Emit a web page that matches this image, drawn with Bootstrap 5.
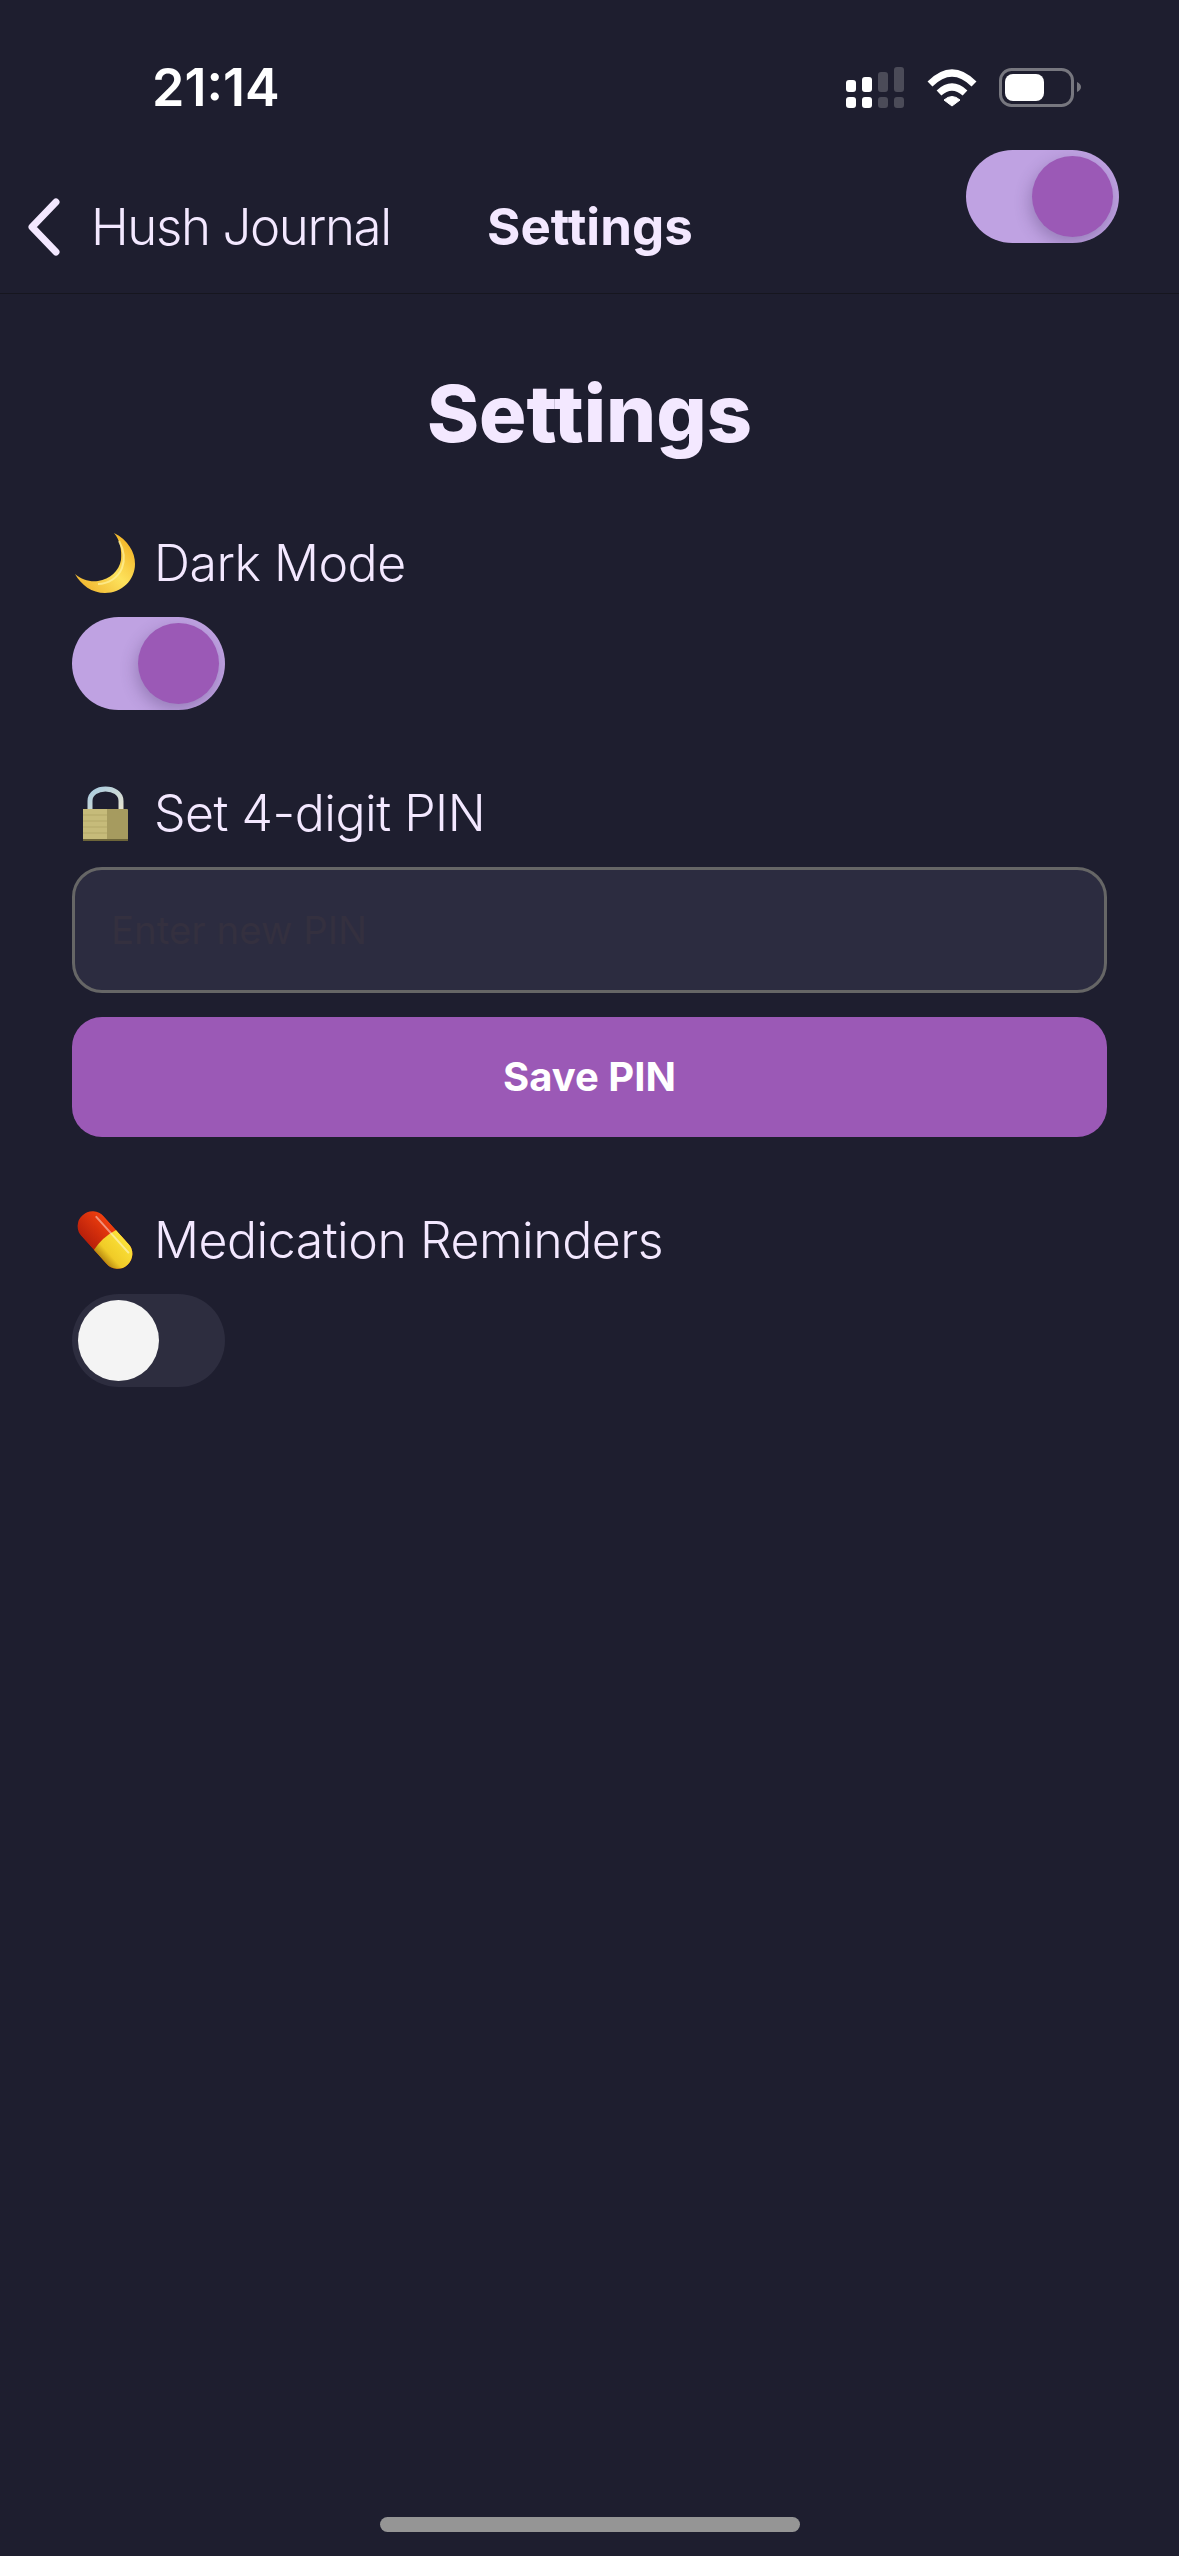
<!DOCTYPE html>
<html lang="en">
<head>
  <meta charset="UTF-8" />
  <meta name="viewport" content="width=device-width, initial-scale=1" />
  <title>Settings</title>
  <link href="https://cdn.jsdelivr.net/npm/bootstrap@5.3.3/dist/css/bootstrap.min.css" rel="stylesheet">

  <style>
    html, body {
      margin: 0;
      background: #1e1e2f;
      font-family: Inter, "Liberation Sans", sans-serif;
      color: #f3e8ff;
    }

    .screen {
      width: 1179px;
      min-height: 2556px;
    }

    /* Status bar */
    .status-bar {
      height: 150px;
      padding: 59px 98px 0 152px;
      color: #fff;
    }

    .status-time {
      font-size: 52px;
      font-weight: 600;
      line-height: 58px;
    }

    .status-icons {
      margin-top: 8px;
    }

    /* Nav row */
    .nav-row {
      height: 144px;
      padding: 0 60px 0 28px;
      border-bottom: 1px solid #16161f;
    }

    .nav-side {
      flex: 0 0 459px;
    }

    .nav-back {
      margin-top: 46px;
      font-size: 51px;
      font-weight: 300;
      line-height: 62px;
      letter-spacing: -1.4px;
      gap: 31px;
      color: #f3e8ff;
    }

    .nav-title {
      margin-top: 46px;
      font-size: 51px;
      font-weight: 700;
      line-height: 62px;
    }

    /* Toggle */
    .switch {
      width: 153px;
      height: 93px;
      padding: 6px;
      border-radius: 47px;
      overflow: hidden;
    }

    .switch-on {
      background: #bfa2e2;
      justify-content: flex-end;
    }

    .switch-off {
      background: #2d2d3f;
      justify-content: flex-start;
    }

    .switch-knob {
      width: 81px;
      height: 81px;
      border-radius: 50%;
    }

    .switch-on .switch-knob {
      background: #9b59b6;
      box-shadow: -2px 6px 16px rgba(60, 40, 90, 0.3);
    }

    .switch-off .switch-knob {
      background: #f4f4f4;
    }

    /* Content */
    .content {
      padding: 69px 72px 0;
    }

    .page-title {
      margin: 0 0 69px;
      font-size: 79px;
      font-weight: 800;
      line-height: 100px;
      text-align: center;
    }

    .setting-label {
      margin-bottom: 23px;
      font-size: 50px;
      font-weight: 300;
      line-height: 62px;
      letter-spacing: -0.5px;
      gap: 10px;
    }

    .setting-group {
      margin-bottom: 72px;
    }

    .pin-input.form-control {
      height: 126px;
      padding: 0 36px;
      margin-bottom: 24px;
      background: #2c2c40;
      border: 3px solid #666;
      border-radius: 30px;
      font-size: 38.4px;
      color: #f3e8ff;
    }

    .pin-input.form-control::placeholder {
      color: #34303f;
      opacity: 1;
    }

    .pin-save.btn {
      height: 120px;
      background: #9b59b6;
      border: 0;
      border-radius: 30px;
      color: #fff;
      font-size: 40px;
      font-weight: 700;
    }

    /* Home indicator */
    .home-bar {
      width: 420px;
      height: 15px;
      margin-bottom: 24px;
      border-radius: 8px;
      background: #959595;
    }
  </style>
</head>
<body>
  <div class="screen d-flex flex-column">

    <div class="status-bar d-flex justify-content-between align-items-start">
      <span class="status-time">21:14</span>
      <svg class="status-icons" width="235" height="42" viewBox="846 67 235 42">
        <g fill="#fff">
          <rect x="846" y="80" width="10" height="12" rx="3"/>
          <rect x="862" y="77" width="10" height="15" rx="3"/>
          <rect x="846" y="97" width="10" height="11" rx="3"/>
          <rect x="862" y="97" width="10" height="11" rx="3"/>
        </g>
        <g fill="#4b4b58">
          <rect x="878" y="72" width="10" height="20" rx="3"/>
          <rect x="894" y="67" width="10" height="25" rx="3"/>
          <rect x="878" y="97" width="10" height="11" rx="3"/>
          <rect x="894" y="97" width="10" height="11" rx="3"/>
        </g>
        <g fill="none" stroke="#fff" stroke-width="7">
          <path d="M930 84 Q952 62 974 84"/>
          <path d="M939 93 Q952 81 965 93"/>
        </g>
        <path d="M944 100 Q952 93 960 100 L952 106 Z" fill="#fff" stroke="#fff" stroke-width="1"/>
        <rect x="1000.500" y="69.500" width="72" height="36" rx="11" fill="none" stroke="#77777f" stroke-width="3"/>
        <rect x="1005" y="74" width="39" height="27" rx="8" fill="#fff"/>
        <path d="M1077 82 Q1081 84 1081 87 Q1081 90 1077 92 Z" fill="#77777f"/>
      </svg>
    </div>

    <nav class="nav-row d-flex align-items-start">
      <div class="nav-side d-flex">
        <a class="nav-back d-flex align-items-center text-decoration-none" href="#">
          <svg width="32" height="58" viewBox="0 0 32 58"><path d="M28 4 L4 29 L28 54" fill="none" stroke="#f3e8ff" stroke-width="7" stroke-linecap="round" stroke-linejoin="round"/></svg>
          <span>Hush Journal</span>
        </a>
      </div>
      <div class="nav-title">Settings</div>
      <div class="flex-grow-1 d-flex justify-content-end">
        <div class="switch switch-on d-flex"><div class="switch-knob"></div></div>
      </div>
    </nav>

    <main class="content flex-grow-1">
      <h1 class="page-title">Settings</h1>

      <div class="setting-group">
        <div class="setting-label d-flex align-items-center">
          <svg width="72" height="62" viewBox="0 0 72 62">
            <defs>
              <linearGradient id="moonFill" x1="0.9" y1="0.2" x2="0.2" y2="0.9">
                <stop offset="0" stop-color="#f4b92c"/>
                <stop offset="0.5" stop-color="#fde25c"/>
                <stop offset="1" stop-color="#f2bb35"/>
              </linearGradient>
            </defs>
            <path d="M42 1 C56 8 63 20 63 32 C63 48 50 61 33 61 C20 61 9 53 3 42 C10 48 18 50 26 49 C38 47 47 39 49 28 C50 18 48 8 42 1 Z" fill="url(#moonFill)"/>
            <path d="M47 9 C52 18 53 28 50 36 C46 46 36 52 26 52" fill="none" stroke="#fff3a0" stroke-width="2" opacity="0.7"/>
          </svg>
          <span>Dark Mode</span>
        </div>
        <div class="switch switch-on d-flex"><div class="switch-knob"></div></div>
      </div>

      <div class="setting-group">
        <div class="setting-label d-flex align-items-center">
          <svg width="72" height="62" viewBox="0 0 72 62">
            <defs>
              <linearGradient id="shackle" x1="0" y1="0" x2="1" y2="1">
                <stop offset="0" stop-color="#a9cbe0"/>
                <stop offset="1" stop-color="#e6e3d0"/>
              </linearGradient>
            </defs>
            <path d="M18 28 V19 C18 3 49 3 49 19 V28" fill="none" stroke="url(#shackle)" stroke-width="5"/>
            <rect x="11" y="27" width="45" height="32" rx="1" fill="#a69b5f"/>
            <path d="M11 27 H35 V59 H11 Z" fill="#c6bb7a"/>
            <path d="M11 33 H35 M11 39 H35 M11 45 H35 M11 51 H35" stroke="#b3a869" stroke-width="1"/>
            <rect x="11" y="57" width="45" height="2" fill="#6d6539"/>
          </svg>
          <span>Set 4-digit PIN</span>
        </div>
        <input type="password" class="pin-input form-control" placeholder="Enter new PIN">
        <button type="button" class="pin-save btn w-100">Save PIN</button>
      </div>

      <div class="setting-group">
        <div class="setting-label d-flex align-items-center">
          <svg width="72" height="62" viewBox="0 0 72 62">
            <defs>
              <linearGradient id="pillRed" x1="0" y1="0" x2="0" y2="1">
                <stop offset="0" stop-color="#f0400f"/>
                <stop offset="1" stop-color="#b81f0a"/>
              </linearGradient>
              <linearGradient id="pillYellow" x1="0" y1="0" x2="0" y2="1">
                <stop offset="0" stop-color="#fbe23a"/>
                <stop offset="0.7" stop-color="#f0cb27"/>
                <stop offset="1" stop-color="#b98a10"/>
              </linearGradient>
              <clipPath id="pillClip"><rect x="-0.500" y="16" width="67" height="30" rx="15"/></clipPath>
            </defs>
            <g transform="rotate(48 33 31)" clip-path="url(#pillClip)">
              <rect x="-0.500" y="16" width="67" height="30" fill="url(#pillRed)"/>
              <path d="M33 16 Q29 31 33 46 H67 V16 Z" fill="url(#pillYellow)"/>
              <path d="M10 22 H58" stroke="#fff" stroke-width="2" stroke-linecap="round" opacity="0.45"/>
            </g>
          </svg>
          <span>Medication Reminders</span>
        </div>
        <div class="switch switch-off d-flex"><div class="switch-knob"></div></div>
      </div>
    </main>

    <div class="home-bar mx-auto"></div>
  </div>

  <script src="https://cdn.jsdelivr.net/npm/bootstrap@5.3.3/dist/js/bootstrap.bundle.min.js"></script>
</body>
</html>
